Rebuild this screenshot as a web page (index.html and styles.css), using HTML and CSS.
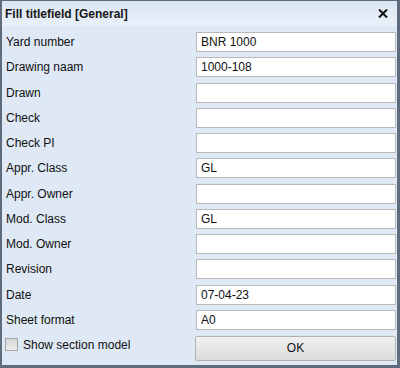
FILE: index.html
```html
<!DOCTYPE html>
<html lang="en">
  <head>
    <meta charset="UTF-8" />
    <title>Fill titlefield</title>
    <link rel="stylesheet" href="styles.css">
  </head>
  <body>
    <div class="window">
      <div class="titlebar">
        <span class="title">Fill titlefield [General]</span>
        <svg class="close" width="10" height="9" viewBox="0 0 10 9">
          <path d="M1 0.5 L9 8.5 M9 0.5 L1 8.5" stroke="#111" stroke-width="2" />
        </svg>
      </div>

      <div class="content">
        <div class="form">
          <label>Yard number</label><input type="text" value="BNR 1000" />
          <label>Drawing naam</label><input type="text" value="1000-108" />
          <label>Drawn</label><input type="text" />
          <label>Check</label><input type="text" />
          <label>Check PI</label><input type="text" />
          <label>Appr. Class</label><input type="text" value="GL" />
          <label>Appr. Owner</label><input type="text" />
          <label>Mod. Class</label><input type="text" value="GL" />
          <label>Mod. Owner</label><input type="text" />
          <label>Revision</label><input type="text" />
          <label>Date</label><input type="text" value="07-04-23" />
          <label>Sheet format</label><input type="text" value="A0" />
        </div>

        <div class="footer">
          <label class="check"><span class="box"></span>Show section model</label>
          <button>OK</button>
        </div>
      </div>
    </div>
  </body>
</html>
```

FILE: styles.css
```css
body {
  margin: 0;
  font-family: "Liberation Sans", Arial, sans-serif;
  font-size: 12px;
  color: #101010;
}

.window {
  width: 400px;
  height: 368px;
  box-sizing: border-box;
  border-style: solid;
  border-color: #5f6c7e;
  border-width: 1px 3px 3px 2px;
  background-color: #dfe9f5;
  display: flex;
  flex-direction: column;
}

.titlebar {
  height: 25px;
  display: flex;
  align-items: center;
  justify-content: space-between;
  padding: 0 9px 0 3px;
  background: linear-gradient(#dbe6f3, #e9f0f9);
}

.title {
  font-weight: bold;
  color: #161616;
}

.close {
  display: block;
}

.content {
  padding: 6px 1px 0 2px;
}

.form {
  display: grid;
  grid-template-columns: 1fr 200px;
  row-gap: 5.27px;
  align-items: center;
}

.form label {
  padding-left: 2px;
}

input[type="text"] {
  height: 20px;
  box-sizing: border-box;
  margin: 0;
  padding: 0 4px;
  border: 1px solid #b9b9b9;
  background-color: #fff;
  font-family: "Liberation Sans", Arial, sans-serif;
  font-size: 12px;
  color: #101010;
  outline: none;
}

.footer {
  display: grid;
  grid-template-columns: 1fr 201px;
  margin-top: 6px;
  margin-left: -1px;
}

.check {
  display: flex;
  align-items: center;
  gap: 5px;
  height: 18px;
  padding-left: 2px;
}

.box {
  width: 11px;
  height: 11px;
  border: 1px solid #a3a3a3;
  background: linear-gradient(#d6d6d6, #ededed);
}

button {
  height: 25px;
  margin: 0;
  border: 1px solid #b2b2b2;
  border-radius: 2px;
  background: linear-gradient(#f0f0f0, #dcdcdc);
  font-family: "Liberation Sans", Arial, sans-serif;
  font-size: 12px;
  color: #101010;
}
```
